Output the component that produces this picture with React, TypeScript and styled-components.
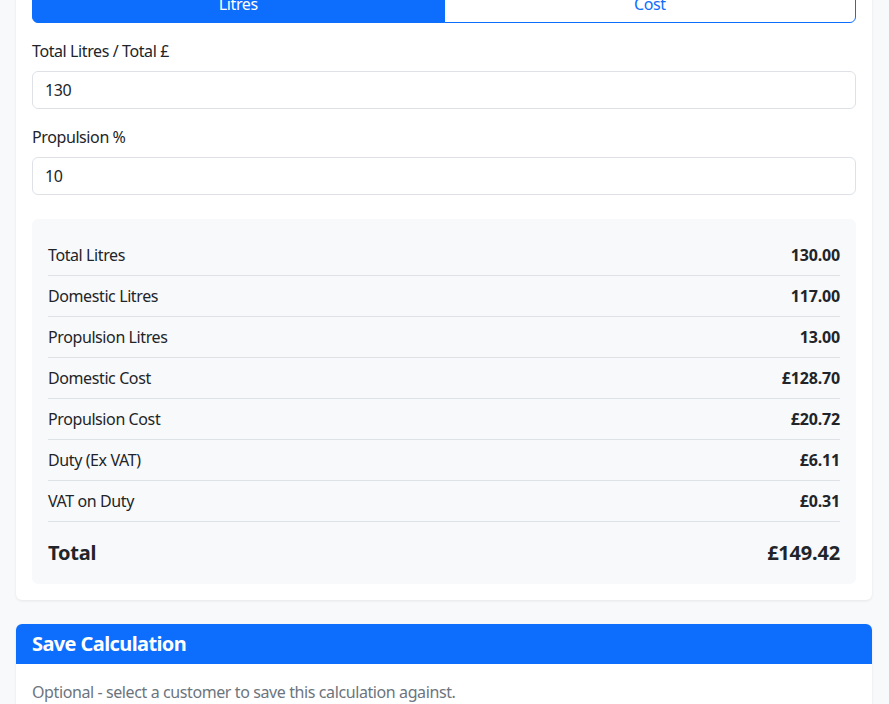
import React, { useState } from "react";
import styled, { createGlobalStyle } from "styled-components";

const GlobalStyle = createGlobalStyle`
  * { box-sizing: border-box; }
  html, body {
    margin: 0;
    background: #f8f9fa;
    color: #212529;
    font-family: "Noto Sans", "Open Sans", sans-serif;
    font-size: 16px;
    line-height: 1.5;
    letter-spacing: -0.025em;
  }
`;

const Page = styled.div`
  padding: 0 17px 24px 16px;
  margin-top: -31px;
  display: flex;
  flex-direction: column;
  gap: 24px;
`;

const Card = styled.div`
  background: #fff;
  border-radius: 6px;
  box-shadow: 0 1px 3px rgba(0, 0, 0, 0.08);
  overflow: hidden;
`;

const CardBody = styled.div`
  padding: 16px;
`;

const CardHeader = styled.div`
  background: #0d6efd;
  color: #fff;
  padding: 8px 16px;
  h5 {
    margin: 0;
    font-size: 20px;
    font-weight: 700;
    line-height: 24px;
    letter-spacing: -0.03em;
  }
`;

const ToggleGroup = styled.div`
  display: flex;
  margin-bottom: 16px;
`;

const ToggleButton = styled.button<{ $active?: boolean }>`
  flex: 1;
  height: 38px;
  font: inherit;
  letter-spacing: inherit;
  cursor: pointer;
  border: 1px solid #0d6efd;
  background: ${(p) => (p.$active ? "#0d6efd" : "#fff")};
  color: ${(p) => (p.$active ? "#fff" : "#0d6efd")};
  &:first-child {
    border-radius: 6px 0 0 6px;
  }
  &:last-child {
    border-radius: 0 6px 6px 0;
    margin-left: -1px;
  }
`;

const Field = styled.div`
  margin-bottom: 16px;
`;

const Label = styled.label`
  display: block;
  margin-bottom: 8px;
`;

const Input = styled.input`
  display: block;
  width: 100%;
  height: 38px;
  padding: 6px 12px;
  font: inherit;
  letter-spacing: inherit;
  color: #212529;
  border: 1px solid #dee2e6;
  border-radius: 6px;
  background: #fff;
  outline: none;
`;

const Summary = styled.div`
  margin-top: 24px;
  background: #f8f9fa;
  border-radius: 6px;
  padding: 16px;
`;

const Row = styled.div`
  display: flex;
  justify-content: space-between;
  padding: 8px 0;
  border-bottom: 1px solid #dee2e6;
`;

const Value = styled.span`
  font-weight: 700;
  letter-spacing: -0.01em;
`;

const TotalRow = styled.div`
  display: flex;
  justify-content: space-between;
  padding-top: 16px;
  font-size: 20px;
  font-weight: 700;
  line-height: 30px;
  letter-spacing: -0.01em;
`;

const Muted = styled.p`
  margin: 0;
  color: #6c757d;
`;

const rows: [string, string][] = [
  ["Total Litres", "130.00"],
  ["Domestic Litres", "117.00"],
  ["Propulsion Litres", "13.00"],
  ["Domestic Cost", "£128.70"],
  ["Propulsion Cost", "£20.72"],
  ["Duty (Ex VAT)", "£6.11"],
  ["VAT on Duty", "£0.31"],
];

export default function App(): React.ReactElement {
  const [mode, setMode] = useState<"litres" | "cost">("litres");
  const [total, setTotal] = useState("130");
  const [propulsion, setPropulsion] = useState("10");

  return (
    <>
      <GlobalStyle />
      <Page>
        <Card>
          <CardBody>
            <ToggleGroup>
              <ToggleButton $active={mode === "litres"} onClick={() => setMode("litres")}>
                Litres
              </ToggleButton>
              <ToggleButton $active={mode === "cost"} onClick={() => setMode("cost")}>
                Cost
              </ToggleButton>
            </ToggleGroup>
            <Field>
              <Label>Total Litres / Total £</Label>
              <Input value={total} onChange={(e) => setTotal(e.target.value)} />
            </Field>
            <Field>
              <Label>Propulsion %</Label>
              <Input value={propulsion} onChange={(e) => setPropulsion(e.target.value)} />
            </Field>
            <Summary>
              {rows.map(([label, value]) => (
                <Row key={label}>
                  <span>{label}</span>
                  <Value>{value}</Value>
                </Row>
              ))}
              <TotalRow>
                <span>Total</span>
                <span>£149.42</span>
              </TotalRow>
            </Summary>
          </CardBody>
        </Card>
        <Card>
          <CardHeader>
            <h5>Save Calculation</h5>
          </CardHeader>
          <CardBody>
            <Muted>Optional - select a customer to save this calculation against.</Muted>
          </CardBody>
        </Card>
      </Page>
    </>
  );
}
